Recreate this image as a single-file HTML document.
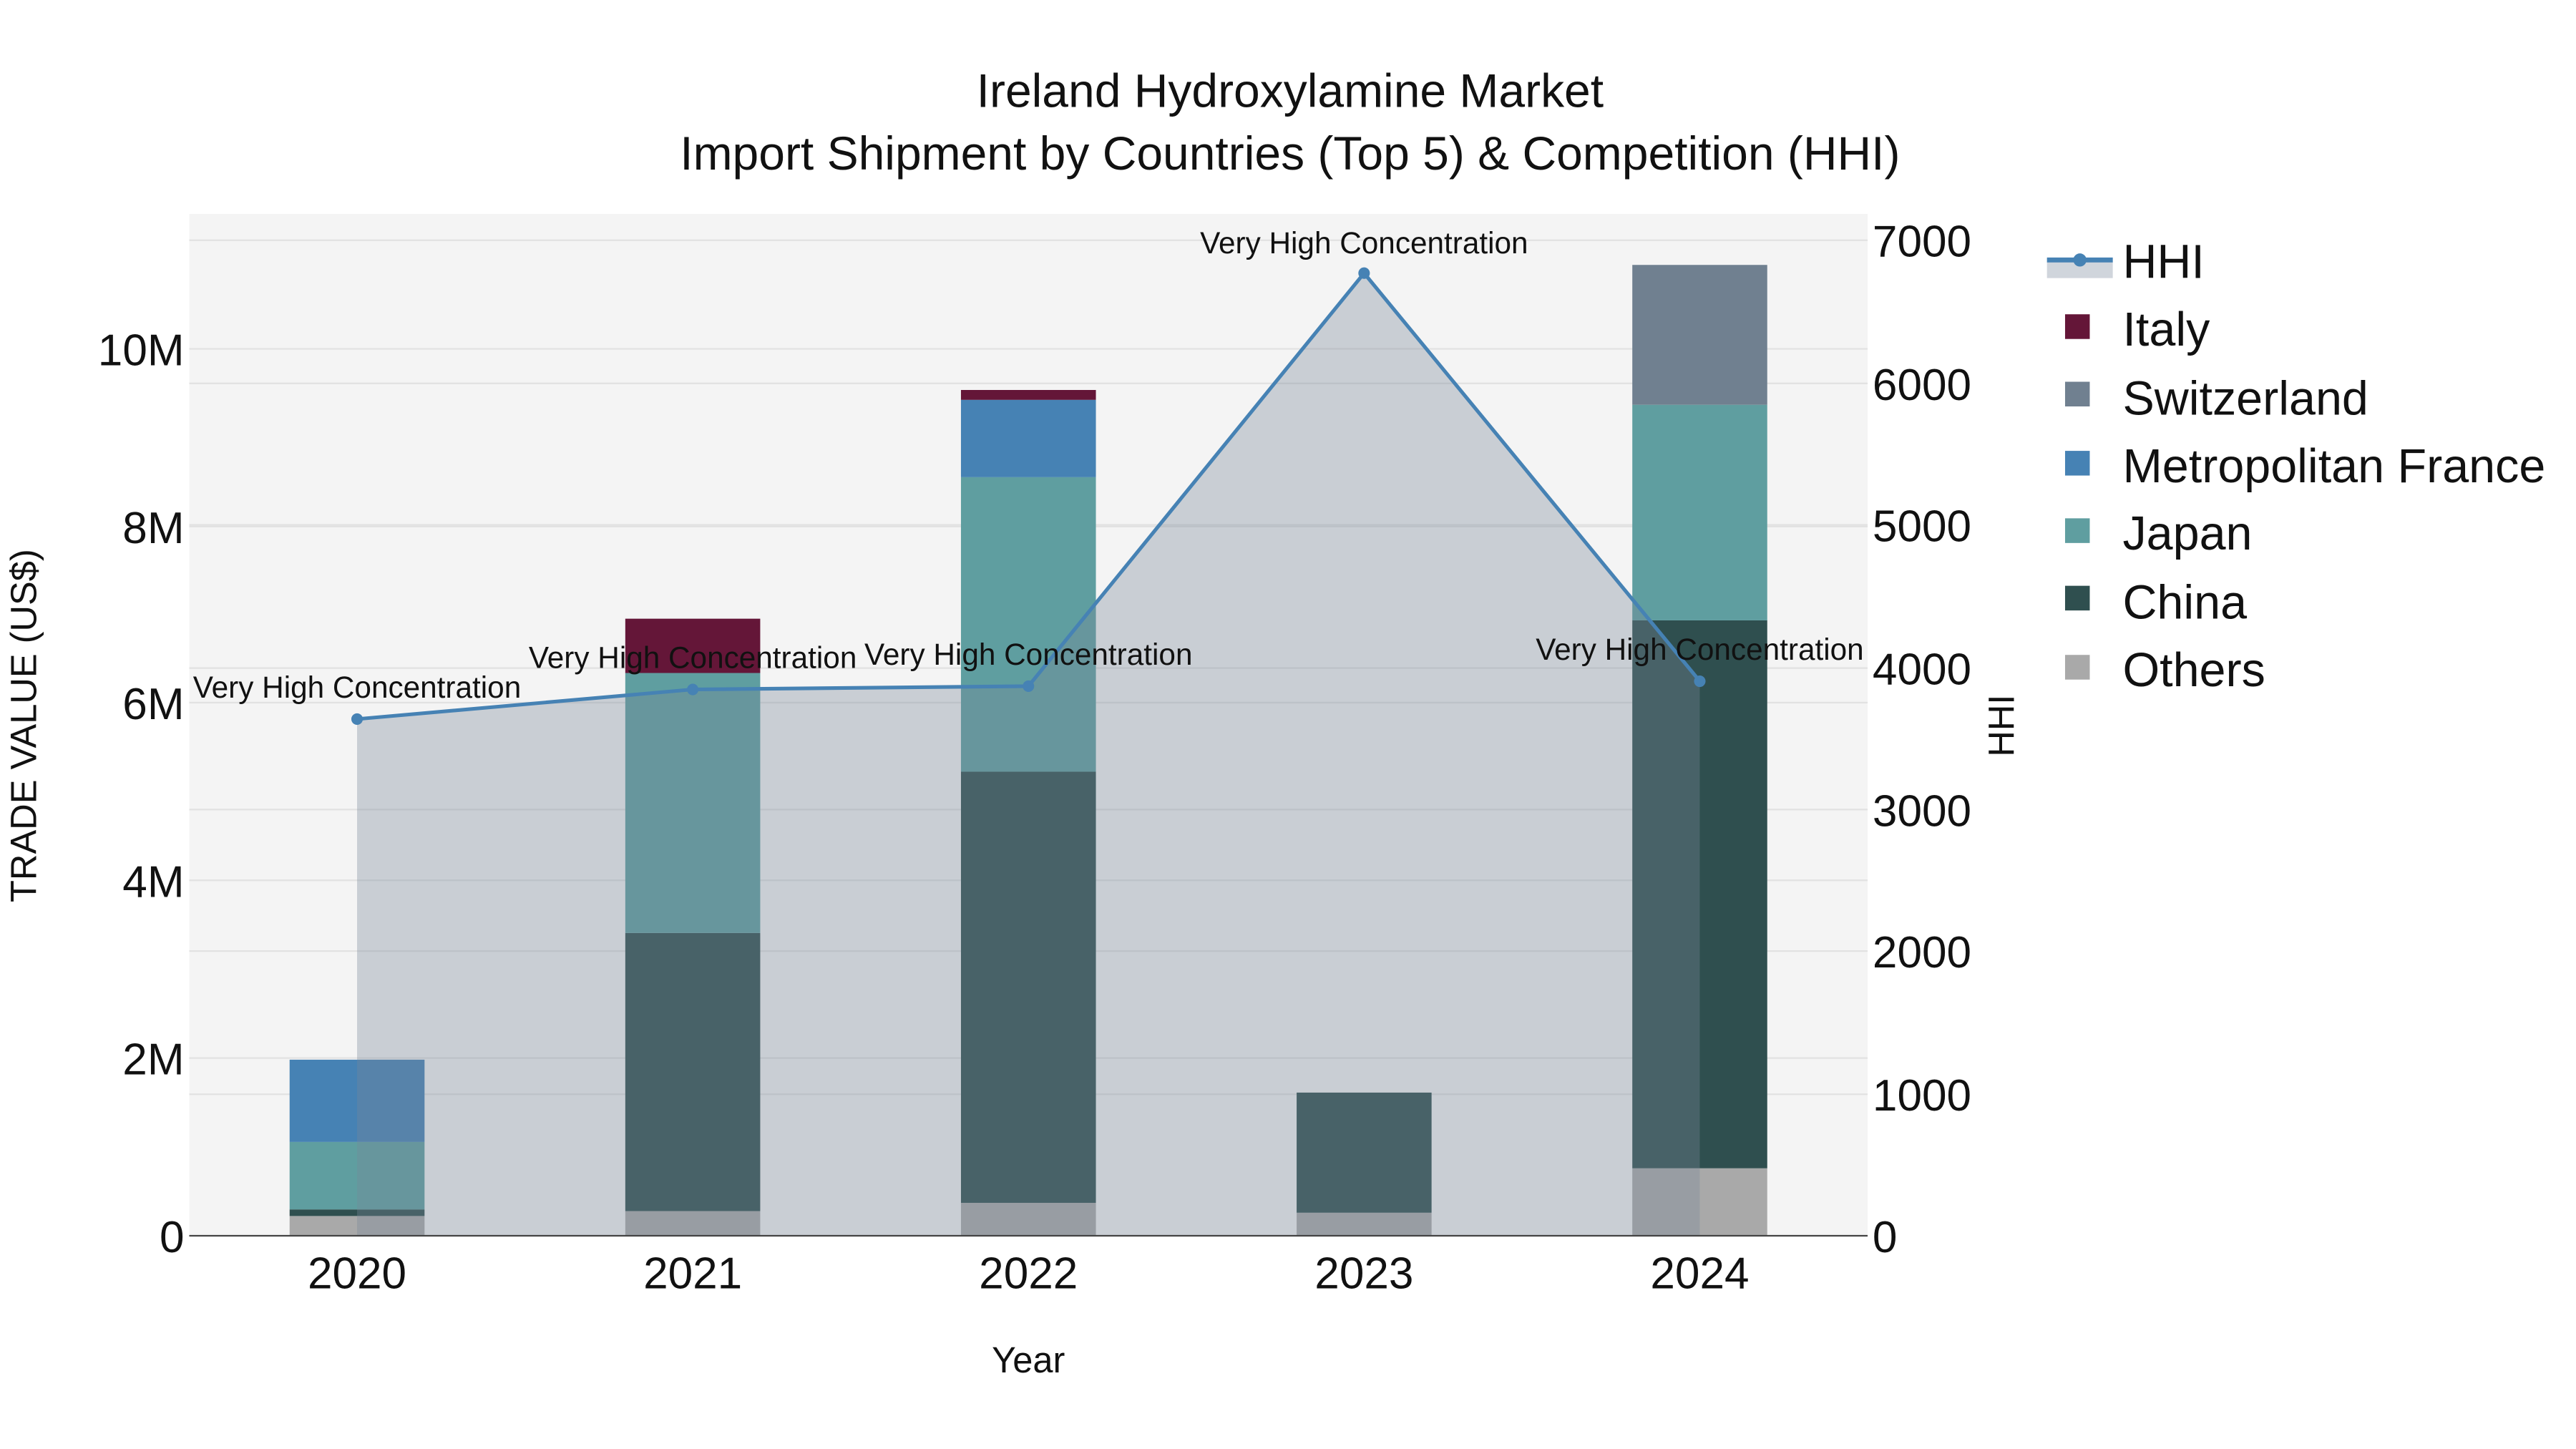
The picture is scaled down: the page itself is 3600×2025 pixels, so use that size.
<!DOCTYPE html>
<html><head><meta charset="utf-8"><style>html,body{margin:0;padding:0;background:#fff}svg{display:block}text{font-family:"Liberation Sans",sans-serif;fill:#111}</style></head>
<body>
<svg width="3600" height="2025" viewBox="0 0 1565.5 880.6" xmlns="http://www.w3.org/2000/svg">
<rect x="0" y="0" width="1565.5" height="880.6" fill="#fff"/>
<rect x="115" y="130" width="1020" height="621" fill="#f4f4f4"/>
<g stroke="#e2e2e2" stroke-width="1">
<line x1="115" x2="1135" y1="643" y2="643"/><line x1="115" x2="1135" y1="535" y2="535"/><line x1="115" x2="1135" y1="427" y2="427"/><line x1="115" x2="1135" y1="320" y2="320"/><line x1="115" x2="1135" y1="212" y2="212"/>
<line x1="115" x2="1135" y1="665" y2="665"/><line x1="115" x2="1135" y1="578" y2="578"/><line x1="115" x2="1135" y1="492" y2="492"/><line x1="115" x2="1135" y1="406" y2="406"/><line x1="115" x2="1135" y1="319" y2="319"/><line x1="115" x2="1135" y1="233" y2="233"/><line x1="115" x2="1135" y1="146" y2="146"/>
</g>
<g>
<rect x="176" y="739" width="82" height="12" fill="#a9a9a9"/>
<rect x="176" y="735" width="82" height="4" fill="#2f4f4f"/>
<rect x="176" y="694" width="82" height="41" fill="#5f9ea0"/>
<rect x="176" y="644" width="82" height="50" fill="#4682b4"/>
<rect x="380" y="736" width="82" height="15" fill="#a9a9a9"/>
<rect x="380" y="567" width="82" height="169" fill="#2f4f4f"/>
<rect x="380" y="409" width="82" height="158" fill="#5f9ea0"/>
<rect x="380" y="376" width="82" height="33" fill="#641638"/>
<rect x="584" y="731" width="82" height="20" fill="#a9a9a9"/>
<rect x="584" y="469" width="82" height="262" fill="#2f4f4f"/>
<rect x="584" y="290" width="82" height="179" fill="#5f9ea0"/>
<rect x="584" y="243" width="82" height="47" fill="#4682b4"/>
<rect x="584" y="237" width="82" height="6" fill="#641638"/>
<rect x="788" y="737" width="82" height="14" fill="#a9a9a9"/>
<rect x="788" y="664" width="82" height="73" fill="#2f4f4f"/>
<rect x="992" y="710" width="82" height="41" fill="#a9a9a9"/>
<rect x="992" y="377" width="82" height="333" fill="#2f4f4f"/>
<rect x="992" y="246" width="82" height="131" fill="#5f9ea0"/>
<rect x="992" y="161" width="82" height="85" fill="#708090"/>
</g>
<polygon points="217,751 217,437 421,419 625,417 829,166 1033,414 1033,751" fill="rgba(119,136,153,0.35)"/>
<polyline points="217,437 421,419 625,417 829,166 1033,414" fill="none" stroke="#4682b4" stroke-width="2.2"/>
<g fill="#4682b4"><circle cx="217" cy="437" r="3.5"/><circle cx="421" cy="419" r="3.5"/><circle cx="625" cy="417" r="3.5"/><circle cx="829" cy="166" r="3.5"/><circle cx="1033" cy="414" r="3.5"/></g>
<line x1="115" x2="1135" y1="751" y2="751" stroke="#444" stroke-width="1"/>
<g font-size="18.4" text-anchor="middle">
<text x="217" y="424">Very High Concentration</text>
<text x="421" y="406">Very High Concentration</text>
<text x="625" y="404">Very High Concentration</text>
<text x="829" y="154">Very High Concentration</text>
<text x="1033" y="401">Very High Concentration</text>
</g>
<g font-size="28.7" text-anchor="middle">
<text x="784" y="65">Ireland Hydroxylamine Market</text>
<text x="784" y="103">Import Shipment by Countries (Top 5) &amp; Competition (HHI)</text>
</g>
<g font-size="27" text-anchor="end">
<text x="112" y="761">0</text><text x="112" y="653">2M</text><text x="112" y="545">4M</text><text x="112" y="437">6M</text><text x="112" y="330">8M</text><text x="112" y="222">10M</text>
</g>
<g font-size="27" text-anchor="start">
<text x="1138" y="761">0</text><text x="1138" y="675">1000</text><text x="1138" y="588">2000</text><text x="1138" y="502">3000</text><text x="1138" y="416">4000</text><text x="1138" y="329">5000</text><text x="1138" y="243">6000</text><text x="1138" y="156">7000</text>
</g>
<g font-size="27" text-anchor="middle">
<text x="217" y="783">2020</text><text x="421" y="783">2021</text><text x="625" y="783">2022</text><text x="829" y="783">2023</text><text x="1033" y="783">2024</text>
</g>
<text x="625" y="834" font-size="22" text-anchor="middle">Year</text>
<text transform="translate(22,441) rotate(-90)" font-size="22" text-anchor="middle">TRADE VALUE (US$)</text>
<text transform="translate(1224,441) rotate(-90)" font-size="22" text-anchor="middle">HHI</text>
<rect x="1244" y="159" width="40" height="10" fill="#d0d5dc"/>
<line x1="1244" x2="1284" y1="158" y2="158" stroke="#4682b4" stroke-width="3"/>
<circle cx="1264" cy="158" r="4" fill="#4682b4"/>
<g font-size="28.9">
<text x="1290" y="169">HHI</text>
<text x="1290" y="210">Italy</text>
<text x="1290" y="252">Switzerland</text>
<text x="1290" y="293">Metropolitan France</text>
<text x="1290" y="334">Japan</text>
<text x="1290" y="376">China</text>
<text x="1290" y="417">Others</text>
</g>
<rect x="1255" y="191" width="15" height="15" fill="#641638"/>
<rect x="1255" y="232" width="15" height="15" fill="#708090"/>
<rect x="1255" y="274" width="15" height="15" fill="#4682b4"/>
<rect x="1255" y="315" width="15" height="15" fill="#5f9ea0"/>
<rect x="1255" y="356" width="15" height="15" fill="#2f4f4f"/>
<rect x="1255" y="398" width="15" height="15" fill="#a9a9a9"/>
</svg>
</body></html>
